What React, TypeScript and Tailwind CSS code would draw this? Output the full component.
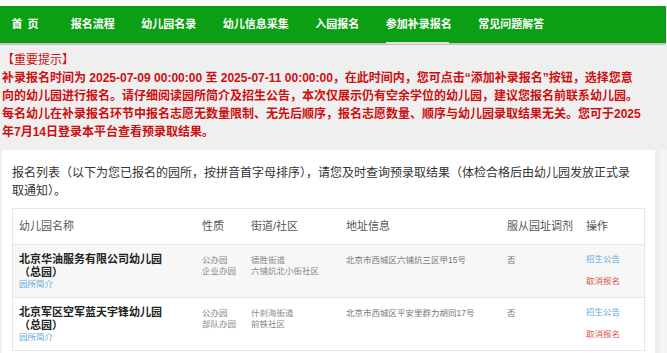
import React from "react";

const navItems = ["报名流程", "幼儿园名录", "幼儿信息采集", "入园报名", "参加补录报名", "常见问题解答"];

type Row = {
  name1: string;
  name2: string;
  kind: [string, string];
  street: [string, string];
  addr: string;
  obey: string;
  bg: string;
};

const rows: Row[] = [
  {
    name1: "北京华油服务有限公司幼儿园",
    name2: "（总园）",
    kind: ["公办园", "企业办园"],
    street: ["德胜街道", "六铺炕北小街社区"],
    addr: "北京市西城区六铺炕三区甲15号",
    obey: "否",
    bg: "bg-[#f7f7f7]",
  },
  {
    name1: "北京军区空军蓝天宇锋幼儿园",
    name2: "（总园）",
    kind: ["公办园", "部队办园"],
    street: ["什刹海街道", "前铁社区"],
    addr: "北京市西城区平安里群力胡同17号",
    obey: "否",
    bg: "bg-white",
  },
];

export default function App() {
  return (
    <div className="w-[667px] h-[353px] overflow-hidden bg-[#efefef] font-['Liberation_Sans','Noto_Sans_CJK_SC',sans-serif]">
      <div className="h-[6px] bg-white" />
      <div className="w-[666px] h-[37px] bg-[#0c9e13] flex items-stretch pl-[11.5px] gap-[26.5px] text-white font-bold text-[11px]">
        <div className="flex items-center w-[32.7px]">
          首<span className="inline-block w-[5px]" />页
        </div>
        {navItems.map((t) => (
          <div key={t} className="relative flex items-center">
            {t}
            {t === "参加补录报名" && (
              <div className="absolute left-0 right-[3px] bottom-[-1px] h-[2px] bg-[#e2e2e2]" />
            )}
          </div>
        ))}
      </div>
      <div className="w-[666px] h-[2px] bg-[#c4c4c4]" />

      <div className="pt-[6px] pl-[2px] text-[12px] leading-[18px] font-bold text-[#cc1010] whitespace-nowrap">
        <div className="font-normal">【重要提示】</div>
        <div>
          补录报名时间为 2025-07-09 00:00:00 至 2025-07-11 00:00:00，在此时间内，您可点击“添加补录报名”按钮，选择您意
        </div>
        <div>
          向的幼儿园进行报名。请仔细阅读园所简介及招生公告，本次仅展示仍有空余学位的幼儿园，建议您报名前联系幼儿园。
        </div>
        <div>
          每名幼儿在补录报名环节中报名志愿无数量限制、无先后顺序，报名志愿数量、顺序与幼儿园录取结果无关。您可于2025
        </div>
        <div>年7月14日登录本平台查看预录取结果。</div>
      </div>

      <div className="flex mt-[9px]">
        <div className="ml-[2px] w-[653px] bg-white pt-[14px] pl-[10px] pr-[10px] h-[300px]">
          <div className="text-[12px] leading-[18px] text-[#333] whitespace-nowrap">
            <div>报名列表（以下为您已报名的园所，按拼音首字母排序），请您及时查询预录取结果（体检合格后由幼儿园发放正式录</div>
            <div>取通知）。</div>
          </div>

          <div className="mt-[8px] w-[633px] border-l border-r border-t border-[#e6e6e6]">
            <div className="grid grid-cols-[183px_49px_95px_161px_79px_66px] h-[36px] items-center border-b border-[#e6e6e6] text-[11px] text-[#555]">
              <div className="pl-[6px]">幼儿园名称</div>
              <div className="pl-[6px]">性质</div>
              <div className="pl-[6px]">街道/社区</div>
              <div className="pl-[6px]">地址信息</div>
              <div className="pl-[6px]">服从园址调剂</div>
              <div className="pl-[6px]">操作</div>
            </div>
            {rows.map((r) => (
              <div
                key={r.name1}
                className={`grid grid-cols-[183px_49px_95px_161px_79px_66px] items-start pt-[8px] pb-[7px] border-b border-[#e6e6e6] ${r.bg}`}
              >
                <div className="pl-[6px]">
                  <div className="text-[11px] leading-[13px] font-bold text-[#222]">{r.name1}</div>
                  <div className="text-[11px] leading-[13px] font-bold text-[#222]">{r.name2}</div>
                  <div className="text-[8.5px] leading-[11px] text-[#62aadc]">园所简介</div>
                </div>
                <div className="pl-[6px] pt-[2px] text-[8.5px] leading-[10.5px] text-[#888]">
                  <div>{r.kind[0]}</div>
                  <div>{r.kind[1]}</div>
                </div>
                <div className="pl-[6px] pt-[2px] text-[8.5px] leading-[10.5px] text-[#888]">
                  <div>{r.street[0]}</div>
                  <div>{r.street[1]}</div>
                </div>
                <div className="pl-[6px] pt-[2px] text-[8.5px] leading-[10.5px] text-[#777]">{r.addr}</div>
                <div className="pl-[6px] pt-[2px] text-[8.5px] leading-[10.5px] text-[#777]">{r.obey}</div>
                <div className="pl-[6px] pt-[1px] text-[8.5px] leading-[11px]">
                  <div className="text-[#62aadc]">招生公告</div>
                  <div className="mt-[11px] text-[#d9534f]">取消报名</div>
                </div>
              </div>
            ))}
          </div>
        </div>
        <div className="w-[5px]" />
        <div className="w-[7px] h-[300px] bg-[#f5f5f5]" />
      </div>
    </div>
  );
}
